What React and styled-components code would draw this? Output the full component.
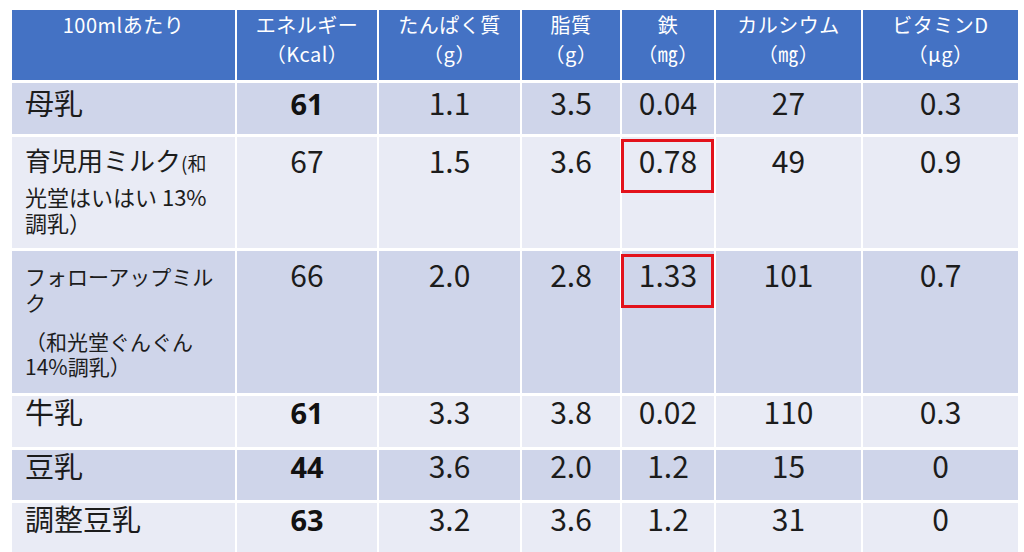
import React from "react";
import styled, { createGlobalStyle } from "styled-components";

const Global = createGlobalStyle`
  html, body { margin: 0; padding: 0; background: #ffffff; }
  body { font-family: "Noto Sans CJK JP", "Noto Sans", sans-serif; color: #1c1c1c; }
`;

const Page = styled.div`
  padding: 10px 0 0 12px;
  width: 1024px;
  height: 552px;
  box-sizing: border-box;
  overflow: hidden;
`;

const Table = styled.div`
  display: flex;
  flex-direction: column;
  gap: 3px;
  width: 1006px;
`;

const Row = styled.div`
  display: grid;
  grid-template-columns: 223px 140px 141px 98px 92px 145px 155px;
  column-gap: 2px;
  height: ${(p) => p.$h}px;
`;

const HeadCell = styled.div`
  background: #4472c4;
  color: #ffffff;
  font-size: 20px;
  letter-spacing: 0.5px;
  line-height: 29px;
  text-align: center;
  white-space: nowrap;
`;

const Cell = styled.div`
  position: relative;
  background: ${(p) => (p.$dark ? "#cfd5ea" : "#e9ebf5")};
  padding-top: ${(p) => p.$pad}px;
  box-sizing: border-box;
`;

const LabelCell = styled(Cell)`
  padding-left: 13px;
`;

const NumCell = styled(Cell)`
  text-align: center;
  font-size: 30px;
  line-height: ${(p) => p.$lh}px;
  font-weight: 400;
  ${(p) =>
    p.$boxed &&
    `
    &::after {
      content: "";
      position: absolute;
      left: -1px;
      right: 0;
      top: ${p.$boxTop}px;
      height: 54px;
      border: 3px solid #e3121b;
      box-sizing: border-box;
    }
  `}
`;

const BoldNum = styled.span`
  font-family: "Noto Sans", "Liberation Sans", sans-serif;
  font-weight: 700;
  font-size: 29px;
  color: #111;
`;

const MainLabel = styled.div`
  font-size: ${(p) => p.$size || 29}px;
  line-height: ${(p) => p.$lh}px;
  white-space: nowrap;
`;

const Small = styled.span`
  font-size: 19px;
`;

const SubLines = styled.div`
  font-size: ${(p) => p.$size}px;
  line-height: ${(p) => p.$lh}px;
  margin-top: ${(p) => p.$mt}px;
  white-space: nowrap;
`;

const headers = [
  ["100mlあたり"],
  ["エネルギー", "（Kcal）"],
  ["たんぱく質", "（g）"],
  ["脂質", "（g）"],
  ["鉄", "（㎎）"],
  ["カルシウム", "（㎎）"],
  ["ビタミンD", "（μg）"],
];

const rows = [
  {
    h: 51, dark: true, pad: 1, lh: 36,
    label: <MainLabel $lh={36}>母乳</MainLabel>,
    values: [{ v: "61", bold: true }, "1.1", "3.5", "0.04", "27", "0.3"],
  },
  {
    h: 111, dark: false, pad: 5, lh: 36,
    label: (
      <>
        <MainLabel $lh={36} $size={26}>
          育児用ミルク<Small>(和</Small>
        </MainLabel>
        <SubLines $size={22} $lh={26} $mt={2}>
          光堂はいはい 13%
          <br />
          調乳）
        </SubLines>
      </>
    ),
    values: ["67", "1.5", "3.6", { v: "0.78", boxed: true, boxTop: 2 }, "49", "0.9"],
  },
  {
    h: 142, dark: true, pad: 5, lh: 36,
    label: (
      <>
        <SubLines $size={21} $lh={26} $mt={7}>
          フォローアップミル
          <br />ク
        </SubLines>
        <SubLines $size={21} $lh={25} $mt={14}>
          （和光堂ぐんぐん
          <br />
          14%調乳）
        </SubLines>
      </>
    ),
    values: ["66", "2.0", "2.8", { v: "1.33", boxed: true, boxTop: 3 }, "101", "0.7"],
  },
  {
    h: 51, dark: false, pad: 0, lh: 30,
    label: <MainLabel $lh={30}>牛乳</MainLabel>,
    values: [{ v: "61", bold: true }, "3.3", "3.8", "0.02", "110", "0.3"],
  },
  {
    h: 50, dark: true, pad: 0, lh: 30,
    label: <MainLabel $lh={30}>豆乳</MainLabel>,
    values: [{ v: "44", bold: true }, "3.6", "2.0", "1.2", "15", "0"],
  },
  {
    h: 50, dark: false, pad: 0, lh: 30,
    label: <MainLabel $lh={30}>調整豆乳</MainLabel>,
    values: [{ v: "63", bold: true }, "3.2", "3.6", "1.2", "31", "0"],
  },
];

export default function App() {
  return (
    <Page>
      <Global />
      <Table>
        <Row $h={70}>
          {headers.map((lines, i) => (
            <HeadCell key={i}>
              {lines.map((l, j) => (
                <div key={j}>{l}</div>
              ))}
            </HeadCell>
          ))}
        </Row>
        {rows.map((r, i) => (
          <Row key={i} $h={r.h}>
            <LabelCell $dark={r.dark} $pad={r.pad}>
              {r.label}
            </LabelCell>
            {r.values.map((val, j) => {
              const o = typeof val === "string" ? { v: val } : val;
              return (
                <NumCell
                  key={j}
                  $dark={r.dark}
                  $pad={r.pad}
                  $lh={r.lh}
                  $boxed={o.boxed}
                  $boxTop={o.boxTop}
                >
                  {o.bold ? <BoldNum>{o.v}</BoldNum> : o.v}
                </NumCell>
              );
            })}
          </Row>
        ))}
      </Table>
    </Page>
  );
}
